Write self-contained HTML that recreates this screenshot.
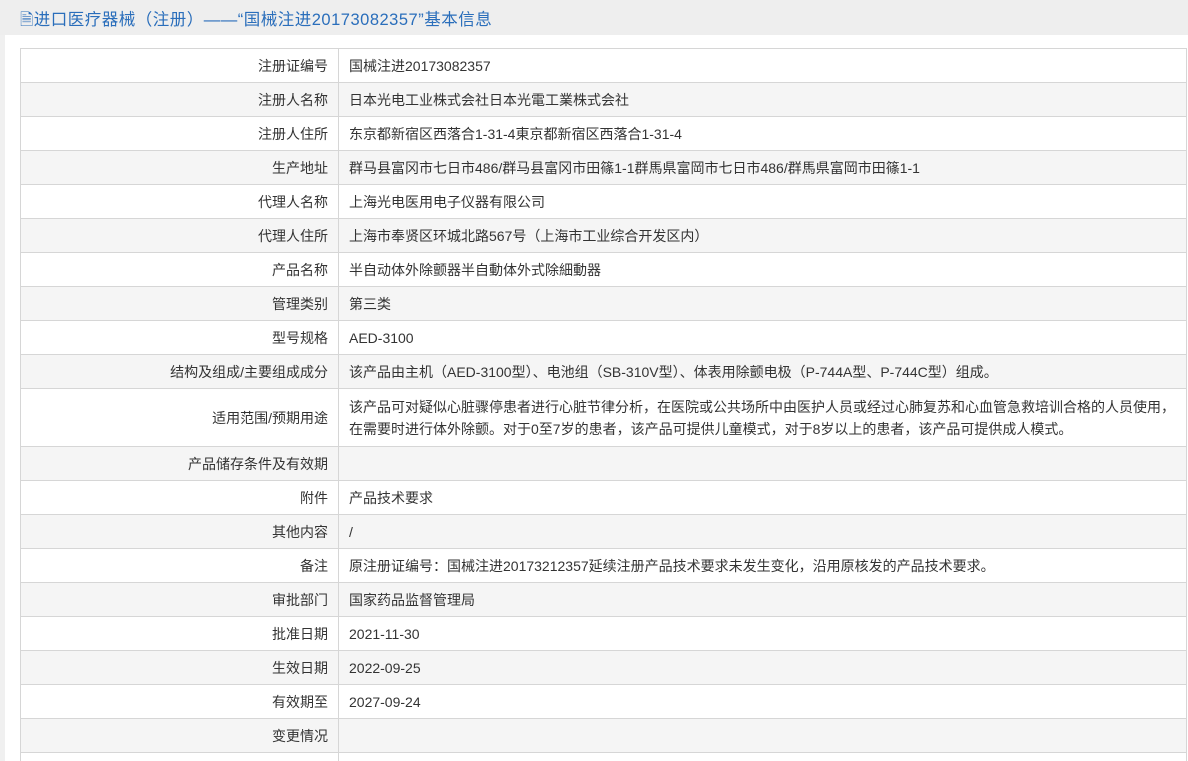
<!DOCTYPE html>
<html><head><meta charset="utf-8"><style>
html,body{margin:0;padding:0;background:#f0f0f0;width:1188px;height:761px;overflow:hidden;font-family:"Liberation Sans","Noto Sans CJK SC",sans-serif;}
.hd{position:absolute;left:0;top:0;width:1188px;height:35px;background:#eeeeee;}
.hd span{position:absolute;left:20px;top:6px;font-size:16.5px;letter-spacing:0.5px;color:#2a6ebb;white-space:nowrap;}
.box{position:absolute;left:5px;top:35px;width:1183px;height:726px;background:#fff;overflow:hidden;}
table{position:absolute;left:15px;top:13px;width:1167px;border-collapse:collapse;font-size:14px;color:#333;}
td{border:1px solid #d6d6d6;height:33px;padding:0 4px 0 10px;line-height:22px;}
td.l{width:303px;text-align:right;padding-right:10px;padding-left:4px;}
tr:nth-child(even){background:#f5f5f5;}
</style></head><body>
<div class="hd"><span>🗎进口医疗器械（注册）——“国械注进20173082357”基本信息</span></div>
<div class="box">
<table>
<tr><td class="l">注册证编号</td><td>国械注进20173082357</td></tr>
<tr><td class="l">注册人名称</td><td>日本光电工业株式会社日本光電工業株式会社</td></tr>
<tr><td class="l">注册人住所</td><td>东京都新宿区西落合1-31-4東京都新宿区西落合1-31-4</td></tr>
<tr><td class="l">生产地址</td><td>群马县富冈市七日市486/群马县富冈市田篠1-1群馬県富岡市七日市486/群馬県富岡市田篠1-1</td></tr>
<tr><td class="l">代理人名称</td><td>上海光电医用电子仪器有限公司</td></tr>
<tr><td class="l">代理人住所</td><td>上海市奉贤区环城北路567号（上海市工业综合开发区内）</td></tr>
<tr><td class="l">产品名称</td><td>半自动体外除颤器半自動体外式除細動器</td></tr>
<tr><td class="l">管理类别</td><td>第三类</td></tr>
<tr><td class="l">型号规格</td><td>AED-3100</td></tr>
<tr><td class="l">结构及组成/主要组成成分</td><td>该产品由主机（AED-3100型）、电池组（SB-310V型）、体表用除颤电极（P-744A型、P-744C型）组成。</td></tr>
<tr><td class="l" style="height:57px">适用范围/预期用途</td><td>该产品可对疑似心脏骤停患者进行心脏节律分析，在医院或公共场所中由医护人员或经过心肺复苏和心血管急救培训合格的人员使用，<br>在需要时进行体外除颤。对于0至7岁的患者，该产品可提供儿童模式，对于8岁以上的患者，该产品可提供成人模式。</td></tr>
<tr><td class="l">产品储存条件及有效期</td><td></td></tr>
<tr><td class="l">附件</td><td>产品技术要求</td></tr>
<tr><td class="l">其他内容</td><td>/</td></tr>
<tr><td class="l">备注</td><td>原注册证编号：国械注进20173212357延续注册产品技术要求未发生变化，沿用原核发的产品技术要求。</td></tr>
<tr><td class="l">审批部门</td><td>国家药品监督管理局</td></tr>
<tr><td class="l">批准日期</td><td>2021-11-30</td></tr>
<tr><td class="l">生效日期</td><td>2022-09-25</td></tr>
<tr><td class="l">有效期至</td><td>2027-09-24</td></tr>
<tr><td class="l">变更情况</td><td></td></tr>
<tr><td class="l"></td><td></td></tr>
</table>
</div>
</body></html>
